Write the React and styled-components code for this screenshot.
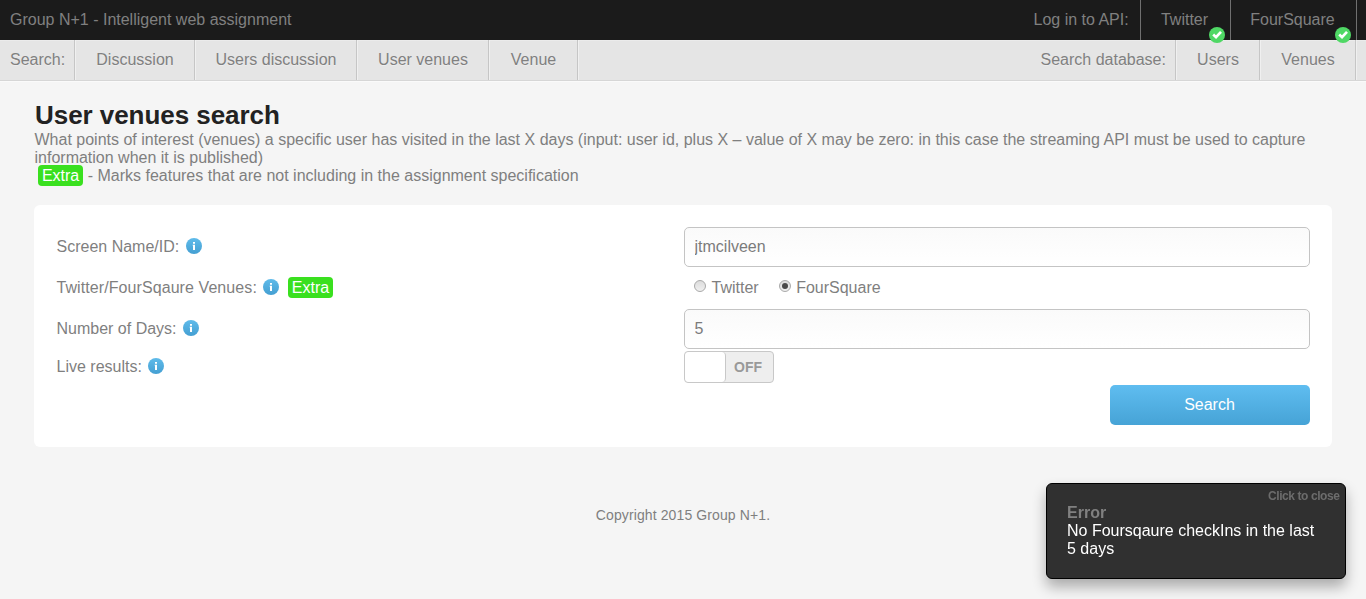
import React from 'react';
import styled, { createGlobalStyle, css } from 'styled-components';

const GlobalStyle = createGlobalStyle`
  * { box-sizing: border-box; }
  body {
    margin: 0;
    background: #f5f5f5;
    color: #7f7f7f;
    font: 16px/18px "Liberation Sans", Arial, sans-serif;
  }
`;

const TopBar = styled.header`
  display: flex;
  justify-content: space-between;
  height: 40px;
  padding-left: 10px;
  background: #1b1b1b;
  color: #808080;
  line-height: 39px;
`;

const NavBar = styled.nav`
  display: flex;
  justify-content: space-between;
  height: 41px;
  padding-left: 10px;
  background: #e5e5e5;
  border-bottom: 1px solid #d6d6d6;
  box-shadow: inset 0 1px 0 #ebebeb, 0 1px 0 #fafafa;
  color: #808080;
  line-height: 39px;
  text-shadow: 0 1px 0 #ededed;
`;

const Group = styled.div`
  display: flex;
`;

const GroupLabel = styled.span`
  width: ${(p) => p.$width}px;
`;

const Tab = styled.a`
  position: relative;
  width: ${(p) => p.$width}px;
  text-align: center;
  ${(p) =>
    p.$dark
      ? css`
          padding-right: 2px;
          border-left: 1px solid #707070;
        `
      : css`
          padding-left: 1px;
          border-left: 1px solid #c6c6c6;
          box-shadow: inset 1px 0 0 #f0f0f0;
        `}
`;

const TabEnd = styled(Tab)`
  padding: 0;
`;

const StatusBadge = styled.svg`
  position: absolute;
  right: 5px;
  bottom: -3px;
  width: 16px;
  height: 16px;
  z-index: 1;
`;

const Page = styled.main`
  padding: 19px 34px 0;
`;

const Title = styled.h1`
  margin: 0;
  padding-left: 1px;
  color: #222;
  font-size: 26px;
  line-height: 31px;
  letter-spacing: -0.05px;
`;

const Intro = styled.p`
  margin: 0;
  padding-left: 0.5px;
`;

const ExtraTag = styled.span`
  display: inline-block;
  height: 21px;
  margin: -2px 0 -2px 3.4px;
  padding: 0 4px;
  border-radius: 4px;
  background: #3ae01f;
  color: #fff;
  line-height: 21px;
`;

const Panel = styled.form`
  display: flex;
  flex-direction: column;
  height: 242px;
  margin-top: 20px;
  padding: 22px 22px 0;
  border-radius: 6px;
  background: #fff;
`;

const Row = styled.div`
  display: grid;
  grid-template-columns: 628px 626px;
  height: ${(p) => p.$height}px;
`;

const RowLabel = styled.div`
  display: flex;
  align-items: center;
  height: ${(p) => p.$height || 38}px;
  padding-left: 0.5px;
`;

const LabelText = styled.span`
  padding-top: 2px;
  letter-spacing: ${(p) => p.$spacing || 0}px;
`;

const InfoSvg = styled.svg`
  width: 16px;
  height: 16px;
  margin: 0 5px 0 6.5px;
`;

const TextInput = styled.input`
  width: 626px;
  height: 40px;
  padding: 0 9.5px;
  border: 1px solid #c4c4c4;
  border-radius: 5px;
  outline: none;
  background: linear-gradient(#fafafa, #fff);
  color: #7b7b7b;
  font: inherit;
`;

const RadioGroup = styled.div`
  display: flex;
  align-items: center;
  height: 38px;
  padding-left: 10px;
  gap: 20px;
`;

const RadioOption = styled.label`
  display: flex;
  align-items: center;
  gap: 5.5px;
  padding-top: 2px;
`;

const RadioDot = styled.span`
  display: grid;
  place-items: center;
  width: 12px;
  height: 12px;
  margin-top: -4px;
  border: 1px solid #a9a9a9;
  border-radius: 50%;
  background: linear-gradient(#dcdcdc, #f0f0f0);

  &::after {
    content: '';
    width: 6px;
    height: 6px;
    border-radius: 50%;
    background: ${(p) => (p.$checked ? '#4a4a4a' : 'transparent')};
  }
`;

const Toggle = styled.div`
  display: flex;
  width: 90px;
  height: 32px;
  border: 1px solid #c8c8c8;
  border-radius: 4px;
  overflow: hidden;
  background: #eee;
  color: #999;
  font-size: 14px;
  font-weight: bold;
  line-height: 30px;
`;

const ToggleKnob = styled.span`
  width: 41px;
  border-right: 1px solid #c8c8c8;
  border-radius: 4px;
  background: #fff;
`;

const ToggleText = styled.span`
  flex: 1;
  padding-right: 3px;
  text-align: center;
`;

const SearchButton = styled.button`
  align-self: flex-end;
  width: 200px;
  height: 40px;
  padding: 0 1px 1px 0;
  border: 0;
  border-radius: 5px;
  background: linear-gradient(#5fbdf0, #46a3d6);
  color: #fff;
  font: inherit;
`;

const Footer = styled.footer`
  margin-top: 59px;
  font-size: 14px;
  letter-spacing: 0.11px;
  text-align: center;
`;

const Toast = styled.aside`
  position: fixed;
  right: 20px;
  bottom: 20px;
  width: 300px;
  height: 96px;
  padding: 20px 20px 0;
  border: 1px solid #000;
  border-radius: 6px;
  background: #303030;
  box-shadow: 0 8px 14px rgba(0, 0, 0, 0.3);
  color: #fff;
`;

const ToastClose = styled.span`
  position: absolute;
  top: 3px;
  right: 5.5px;
  color: #6c6c6c;
  font-size: 12px;
  font-weight: bold;
  letter-spacing: -0.42px;
`;

const ToastTitle = styled.strong`
  display: block;
  color: #808080;
`;

const Check = () => (
  <StatusBadge viewBox="0 0 16 16">
    <circle cx="8" cy="8" r="8" fill="#4fd865" />
    <path d="M4.2 7.6 7 10.2 12 4.8" fill="none" stroke="#fff" strokeWidth="2.7" />
  </StatusBadge>
);

const Info = () => (
  <InfoSvg viewBox="0 0 16 16">
    <defs>
      <linearGradient id="infoFill" x2="0" y2="1">
        <stop stopColor="#5fbbea" />
        <stop offset="1" stopColor="#449fd2" />
      </linearGradient>
    </defs>
    <circle cx="8" cy="8" r="8" fill="url(#infoFill)" />
    <path d="M7 4h2v1.8H7zM6.6 6.7H9V12H7V7.6h-.4z" fill="#fff" />
  </InfoSvg>
);

export default function App() {
  return (
    <>
      <GlobalStyle />
      <TopBar>
        <span>Group N+1 - Intelligent web assignment</span>
        <Group>
          <GroupLabel $width={106.5}>Log in to API:</GroupLabel>
          <Tab $dark $width={90}>Twitter<Check /></Tab>
          <Tab $dark $width={126}>FourSquare<Check /></Tab>
          <TabEnd $dark $width={10} />
        </Group>
      </TopBar>
      <NavBar>
        <Group>
          <GroupLabel $width={64}>Search:</GroupLabel>
          <Tab $width={120}>Discussion</Tab>
          <Tab $width={162}>Users discussion</Tab>
          <Tab $width={132}>User venues</Tab>
          <Tab $width={89}>Venue</Tab>
          <TabEnd $width={2} />
        </Group>
        <Group>
          <GroupLabel $width={134.5}>Search database:</GroupLabel>
          <Tab $width={84}>Users</Tab>
          <Tab $width={96}>Venues</Tab>
          <TabEnd $width={11} />
        </Group>
      </NavBar>
      <Page>
        <Title>User venues search</Title>
        <Intro>
          What points of interest (venues) a specific user has visited in the last X days (input: user id,
          plus X – value of X may be zero: in this case the streaming API must be used to capture
          information when it is published)
        </Intro>
        <Intro>
          <ExtraTag>Extra</ExtraTag> - Marks features that are not including in the assignment specification
        </Intro>
        <Panel>
          <Row $height={41}>
            <RowLabel><LabelText>Screen Name/ID:</LabelText><Info /></RowLabel>
            <TextInput defaultValue="jtmcilveen" />
          </Row>
          <Row $height={41}>
            <RowLabel>
              <LabelText $spacing={0.08}>Twitter/FourSqaure Venues:</LabelText>
              <Info />
              <ExtraTag>Extra</ExtraTag>
            </RowLabel>
            <RadioGroup>
              <RadioOption><RadioDot />Twitter</RadioOption>
              <RadioOption><RadioDot $checked />FourSquare</RadioOption>
            </RadioGroup>
          </Row>
          <Row $height={42}>
            <RowLabel><LabelText>Number of Days:</LabelText><Info /></RowLabel>
            <TextInput defaultValue="5" />
          </Row>
          <Row $height={34}>
            <RowLabel $height={30}><LabelText>Live results:</LabelText><Info /></RowLabel>
            <Toggle><ToggleKnob /><ToggleText>OFF</ToggleText></Toggle>
          </Row>
          <SearchButton type="button">Search</SearchButton>
        </Panel>
        <Footer>Copyright 2015 Group N+1.</Footer>
      </Page>
      <Toast>
        <ToastClose>Click to close</ToastClose>
        <ToastTitle>Error</ToastTitle>
        No Foursqaure checkIns in the last 5 days
      </Toast>
    </>
  );
}
